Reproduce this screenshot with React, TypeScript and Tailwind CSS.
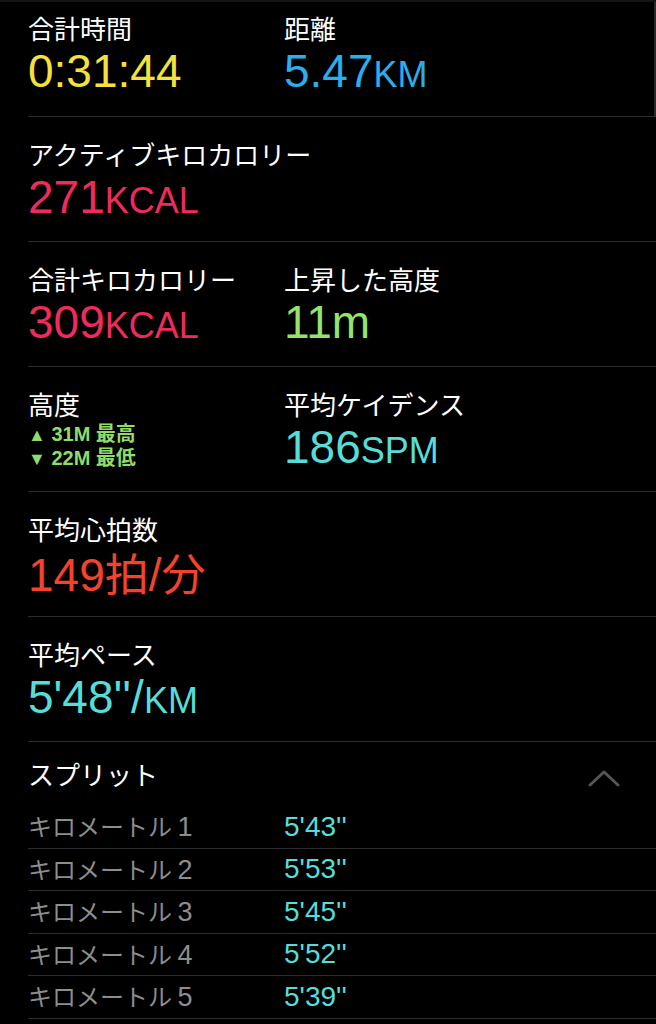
import React from "react";

function Label({ children }: { children: React.ReactNode }) {
  return (
    <div className="font-['Noto_Sans_CJK_JP','Noto_Sans',sans-serif] text-[26px] leading-[30px] text-white whitespace-nowrap">
      {children}
    </div>
  );
}

function Value({ num, unit, color }: { num: React.ReactNode; unit?: string; color: string }) {
  return (
    <div className={`font-['Liberation_Sans','Noto_Sans_CJK_JP',sans-serif] text-[46px] leading-[56px] whitespace-nowrap ${color}`}>
      {num}
      {unit ? <span className="text-[36px]">{unit}</span> : null}
    </div>
  );
}

function Row({ children, first }: { children: React.ReactNode; first?: boolean }) {
  return (
    <div
      className={`ml-[28px] border-b border-[#2c2c2c] grid grid-cols-[256px_1fr] ${
        first ? "h-[117px] pt-[13px]" : "h-[125px] pt-[22px]"
      }`}
    >
      {children}
    </div>
  );
}

const splits = [
  ["キロメートル", "1", "5'43''"],
  ["キロメートル", "2", "5'53''"],
  ["キロメートル", "3", "5'45''"],
  ["キロメートル", "4", "5'52''"],
  ["キロメートル", "5", "5'39''"],
];

export default function App() {
  return (
    <div className="w-[656px] h-[1024px] bg-black overflow-hidden relative">
      <div className="absolute top-0 right-0 w-[2px] h-[116px] bg-[#2a2a2a]" />
      <div className="absolute top-0 left-0 right-0 h-[2px] bg-[#141414]" />
      <Row first>
        <div>
          <Label>合計時間</Label>
          <Value num="0:31:44" color="text-[#f4e23c]" />
        </div>
        <div>
          <Label>距離</Label>
          <Value num="5.47" unit="KM" color="text-[#2aaeec]" />
        </div>
      </Row>
      <Row>
        <div>
          <Label>アクティブキロカロリー</Label>
          <Value num="271" unit="KCAL" color="text-[#f02a5c]" />
        </div>
        <div />
      </Row>
      <Row>
        <div>
          <Label>合計キロカロリー</Label>
          <Value num="309" unit="KCAL" color="text-[#f02a5c]" />
        </div>
        <div>
          <Label>上昇した高度</Label>
          <Value num="11m" color="text-[#93e36c]" />
        </div>
      </Row>
      <Row>
        <div>
          <Label>高度</Label>
          <div className="mt-[3px] flex flex-col font-['Liberation_Sans','Noto_Sans_CJK_JP',sans-serif] text-[20px] leading-[22px] font-semibold text-[#8fdc6b] whitespace-nowrap">
            <span>
              <span className="text-[18px]">▲</span> 31M <span className="font-['Noto_Sans_CJK_JP',sans-serif]">最高</span>
            </span>
            <span>
              <span className="text-[18px]">▼</span> 22M <span className="font-['Noto_Sans_CJK_JP',sans-serif]">最低</span>
            </span>
          </div>
        </div>
        <div>
          <Label>平均ケイデンス</Label>
          <Value num="186" unit="SPM" color="text-[#56ddd9]" />
        </div>
      </Row>
      <Row>
        <div className="col-span-2">
          <Label>平均心拍数</Label>
          <Value
            num={
              <>
                149
                <span className="font-['Noto_Sans_CJK_JP',sans-serif] text-[44px]">拍</span>/
                <span className="font-['Noto_Sans_CJK_JP',sans-serif] text-[44px]">分</span>
              </>
            }
            color="text-[#f4432c]"
          />
        </div>
      </Row>
      <Row>
        <div className="col-span-2">
          <Label>平均ペース</Label>
          <Value num="5'48''/" unit="KM" color="text-[#56ddd9]" />
        </div>
      </Row>
      <div className="ml-[28px] h-[64px] flex items-center justify-between pr-[36px]">
        <div className="font-['Noto_Sans_CJK_JP','Noto_Sans',sans-serif] text-[26px] leading-[30px] text-white">
          スプリット
        </div>
        <svg width="32" height="18" viewBox="0 0 32 18" className="mt-[8px]">
          <path d="M2 16 L16 3 L30 16" fill="none" stroke="#555" strokeWidth="3" strokeLinecap="round" strokeLinejoin="round" />
        </svg>
      </div>
      {splits.map(([k, n, v]) => (
        <div
          key={n}
          className="ml-[28px] h-[42.5px] border-b border-[#2c2c2c] grid grid-cols-[256px_1fr] items-center"
        >
          <div className="font-['Noto_Sans_CJK_JP','Noto_Sans',sans-serif] text-[24px] leading-[30px] text-[#8d8d8d] whitespace-nowrap">
            {k} <span className="font-['Liberation_Sans',sans-serif] text-[27px]">{n}</span>
          </div>
          <div className="font-['Liberation_Sans',sans-serif] text-[28px] leading-[30px] text-[#56ddd9]">
            {v}
          </div>
        </div>
      ))}
    </div>
  );
}
